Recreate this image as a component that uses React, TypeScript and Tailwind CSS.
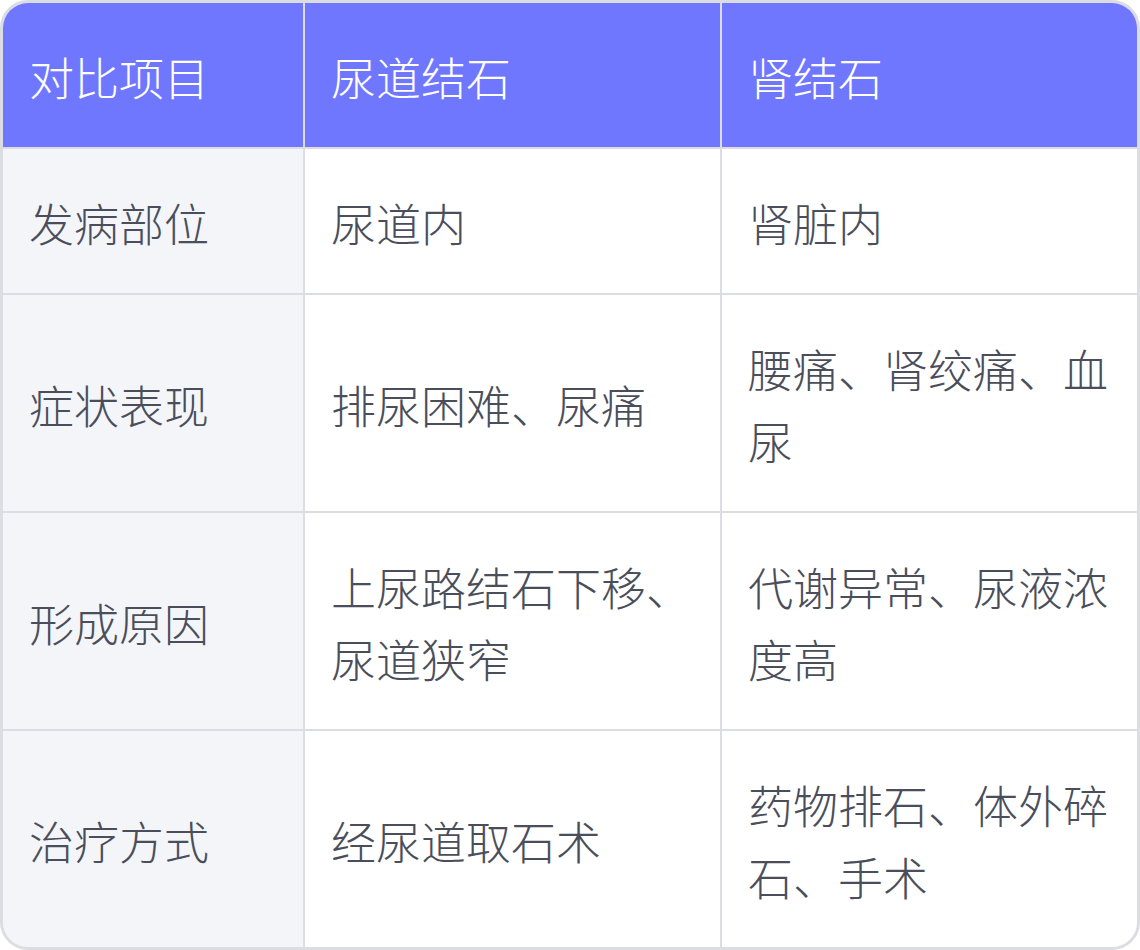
const header = ["对比项目", "尿道结石", "肾结石"];

const rows = [
  ["发病部位", "尿道内", "肾脏内"],
  ["症状表现", "排尿困难、尿痛", "腰痛、肾绞痛、血尿"],
  ["形成原因", "上尿路结石下移、尿道狭窄", "代谢异常、尿液浓度高"],
  ["治疗方式", "经尿道取石术", "药物排石、体外碎石、手术"],
];

export default function App() {
  return (
    <div className="w-[1140px] h-[950px] bg-white">
      <div
        className="w-full h-full rounded-[28px] border-[3px] border-[#dcdde2] overflow-hidden text-[45px] leading-[72px] font-light"
        style={{ fontFamily: '"Noto Sans CJK SC", "Noto Sans", sans-serif' }}
      >
        <div className="grid grid-cols-[300px_415px_415px] grid-rows-[144px_144px_216px_216px_216px] gap-[2px] bg-[#dcdde2] h-full">
          {header.map((h) => (
            <div key={h} className="bg-[#7077ff] text-white flex items-center px-[26px] pt-[38px] pb-[34px]">
              {h}
            </div>
          ))}
          {rows.map((r) =>
            r.map((cell, i) => (
              <div
                key={r[0] + i}
                className={`flex items-center px-[26px] pt-[38px] pb-[34px] text-[#4a4e5b] ${
                  i === 0 ? "bg-[#f4f5f9]" : "bg-white"
                }`}
              >
                <span>{cell}</span>
              </div>
            ))
          )}
        </div>
      </div>
    </div>
  );
}
